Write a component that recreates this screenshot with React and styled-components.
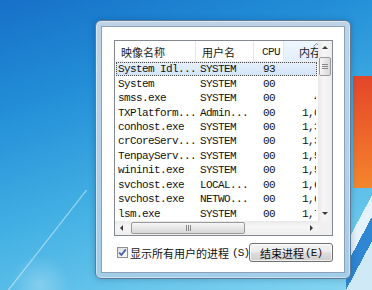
import styled, { createGlobalStyle } from 'styled-components'

const GlobalStyle = createGlobalStyle`
  html, body {
    margin: 0;
    padding: 0;
    width: 372px;
    height: 290px;
    overflow: hidden;
  }
`;

const processes = [
  { name: 'System Idl...', user: 'SYSTEM', cpu: '93', mem: '24 K', selected: true },
  { name: 'System', user: 'SYSTEM', cpu: '00', mem: '48 K' },
  { name: 'smss.exe', user: 'SYSTEM', cpu: '00', mem: '448 K' },
  { name: 'TXPlatform...', user: 'Admin...', cpu: '00', mem: '1,092 K' },
  { name: 'conhost.exe', user: 'SYSTEM', cpu: '00', mem: '1,312 K' },
  { name: 'crCoreServ...', user: 'SYSTEM', cpu: '00', mem: '1,336 K' },
  { name: 'TenpayServ...', user: 'SYSTEM', cpu: '00', mem: '1,516 K' },
  { name: 'wininit.exe', user: 'SYSTEM', cpu: '00', mem: '1,540 K' },
  { name: 'svchost.exe', user: 'LOCAL...', cpu: '00', mem: '1,648 K' },
  { name: 'svchost.exe', user: 'NETWO...', cpu: '00', mem: '1,676 K' },
  { name: 'lsm.exe', user: 'SYSTEM', cpu: '00', mem: '1,744 K' },
];

const Arrow = ({ dir }) => {
  const pts = {
    up: '1,5 4,2 7,5',
    down: '1,2 4,5 7,2',
    left: '5,1 2,4 5,7',
    right: '3,1 6,4 3,7',
  }[dir];
  return (
    <svg width="8" height="8" viewBox="0 0 8 8">
      <polygon points={pts} fill="#3a3a3a" />
    </svg>
  );
};

const Grip = ({ vertical }) =>
  vertical ? (
    <svg width="6" height="7" viewBox="0 0 6 7">
      <path d="M0 1.5h6M0 3.5h6M0 5.5h6" stroke="#8a8a8a" strokeWidth="1" />
    </svg>
  ) : (
    <svg width="7" height="6" viewBox="0 0 7 6">
      <path d="M1.5 0v6M3.5 0v6M5.5 0v6" stroke="#8a8a8a" strokeWidth="1" />
    </svg>
  );

export default function App() {
  return (
    <>
      <GlobalStyle />
      <Desktop>
        <Window>
          <Panel>
            <ListView>
              <Header>
                <HeaderCell $pad={6}>映像名称</HeaderCell>
                <HeaderCell $pad={6}>用户名</HeaderCell>
                <HeaderCell $pad={8} $mono>CPU</HeaderCell>
                <HeaderCell $pad={15} $sorted>
                  <SortMark>
                    <svg width="7" height="4" viewBox="0 0 7 4">
                      <path d="M0.5 3.5L3.5 0.5L6.5 3.5" fill="none" stroke="#6b8fb4" strokeWidth="1" />
                    </svg>
                  </SortMark>
                  内存(专用工作集)
                </HeaderCell>
              </Header>
              <Rows>
                {processes.map((p, i) => (
                  <Row key={i} $selected={p.selected}>
                    <Cell $pad={1}>{p.name}</Cell>
                    <Cell $pad={4}>{p.user}</Cell>
                    <Cell $pad={9}>{p.cpu}</Cell>
                    <Cell $right>{p.mem}</Cell>
                  </Row>
                ))}
              </Rows>
              <VScroll>
                <ScrollButton><Arrow dir="up" /></ScrollButton>
                <VThumb><Grip vertical /></VThumb>
                <Spacer />
                <ScrollButton><Arrow dir="down" /></ScrollButton>
              </VScroll>
              <HScroll>
                <ScrollButton><Arrow dir="left" /></ScrollButton>
                <HThumb><Grip /></HThumb>
                <Spacer />
                <ScrollButton><Arrow dir="right" /></ScrollButton>
              </HScroll>
              <Corner />
            </ListView>
            <Footer>
              <CheckLabel>
                <CheckBox>
                  <svg width="9" height="9" viewBox="0 0 9 9">
                    <path d="M1.2 4.6L3.4 7L7.8 1.4" fill="none" stroke="#3f5fa8" strokeWidth="1.7" />
                  </svg>
                </CheckBox>
                <span>显示所有用户的进程</span>
                <Mono>(S)</Mono>
              </CheckLabel>
              <Button>
                <span>结束进程</span>
                <Mono>(E)</Mono>
              </Button>
            </Footer>
          </Panel>
        </Window>
      </Desktop>
    </>
  );
}

const Desktop = styled.div`
  width: 372px;
  height: 290px;
  box-sizing: border-box;
  padding: 20px 0 0 95px;
  background:
    linear-gradient(118deg, transparent 0 38%, #e4f2fb 38% 52%, #2f86d2 52% 68%, #cfe9f7 68%) 346px 186px / 26px 104px no-repeat,
    linear-gradient(to bottom, #e2462a, #ef6a2b 60%, #f3862e) 353px 76px / 19px 112px no-repeat,
    linear-gradient(128deg, transparent 0 49%, rgba(255, 255, 255, 0.5) 49.6%, transparent 50.6%) 0 190px / 96px 100px no-repeat,
    radial-gradient(circle at 40px 285px, rgba(255, 255, 255, 0.25), transparent 30px),
    linear-gradient(162deg, #1670c7 0%, #238fd8 28%, #44b1e4 58%, #86d6f1 100%);
  font-family: "Noto Sans CJK SC", "Liberation Sans", sans-serif;
`;

const Window = styled.div`
  width: 256px;
  height: 259px;
  box-sizing: border-box;
  padding: 5px;
  border: 1px solid #5d7a96;
  border-radius: 6px;
  background: linear-gradient(to bottom, #bfd3e6, #b5cfe5 60%, #a2cde8);
  box-shadow: inset 0 0 0 1px rgba(255, 255, 255, 0.45), 0 0 6px rgba(0, 30, 70, 0.25);
`;

const Panel = styled.div`
  height: 100%;
  box-sizing: border-box;
  border: 1px solid #8aa2b9;
  background: #fff;
  padding: 13px 11px 10px 12px;
  display: flex;
  flex-direction: column;
  gap: 7px;
`;

const ListView = styled.div`
  width: 219px;
  height: 196px;
  box-sizing: border-box;
  border: 1px solid #828790;
  display: grid;
  grid-template-columns: 203px 14px;
  grid-template-rows: 21px 159px 14px;
  background: #fff;
`;

const Header = styled.div`
  grid-column: 1;
  grid-row: 1;
  display: grid;
  grid-template-columns: 81px 58px 30px 66px;
  overflow: hidden;
  border-bottom: 1px solid #eef0f3;
`;

const HeaderCell = styled.div`
  position: relative;
  display: flex;
  align-items: center;
  padding-left: ${p => p.$pad}px;
  padding-top: 1px;
  border-right: 1px solid #e3e8ee;
  white-space: nowrap;
  overflow: hidden;
  font-size: 11px;
  font-family: ${p => (p.$mono ? '"Liberation Mono", monospace' : '"Noto Sans CJK SC", sans-serif')};
  letter-spacing: ${p => (p.$mono ? '-0.6px' : '0')};
  color: #1b1b1b;
  background: ${p => (p.$sorted ? 'linear-gradient(to bottom, #f0f7fe, #e2eefa)' : '#fff')};
`;

const SortMark = styled.span`
  position: absolute;
  top: 1px;
  left: 29px;
  line-height: 0;
`;

const Rows = styled.div`
  grid-column: 1;
  grid-row: 2;
  display: grid;
  grid-auto-rows: 1fr;
  overflow: hidden;
`;

const Row = styled.div`
  margin: 0 1px;
  display: grid;
  grid-template-columns: 79px 58px 30px 66px;
  align-items: center;
  overflow: hidden;
  border: 1px ${p => (p.$selected ? 'dotted #4a4a4a' : 'solid transparent')};
  background: ${p => (p.$selected ? 'linear-gradient(to bottom, #e6f0fb, #d3e4f8)' : 'transparent')};
`;

const Cell = styled.div`
  padding-left: ${p => p.$pad || 0}px;
  padding-right: ${p => (p.$right ? 6 : 0)}px;
  text-align: ${p => (p.$right ? 'right' : 'left')};
  white-space: nowrap;
  font-family: "Liberation Mono", monospace;
  font-size: 11px;
  letter-spacing: -0.6px;
  color: #111;
  line-height: 12px;
`;

const VScroll = styled.div`
  grid-column: 2;
  grid-row: 1 / 3;
  display: flex;
  flex-direction: column;
  background: linear-gradient(to right, #e9e9e9, #f6f6f6 40%, #eeeeee);
`;

const HScroll = styled.div`
  grid-column: 1;
  grid-row: 3;
  display: flex;
  background: linear-gradient(to bottom, #e9e9e9, #f6f6f6 40%, #eeeeee);
`;

const Corner = styled.div`
  grid-column: 2;
  grid-row: 3;
  background: #f0f0f0;
`;

const ScrollButton = styled.div`
  width: 14px;
  height: 14px;
  flex: none;
  display: flex;
  align-items: center;
  justify-content: center;
`;

const Spacer = styled.div`
  flex: 1;
`;

const VThumb = styled.div`
  margin: 2px 1px 0;
  height: 19px;
  flex: none;
  box-sizing: border-box;
  border: 1px solid #9a9a9a;
  border-radius: 2px;
  background: linear-gradient(to right, #f7f7f7, #e6e6e6 50%, #d8d8d8);
  display: flex;
  align-items: center;
  justify-content: center;
`;

const HThumb = styled.div`
  margin: 1px 0 1px 2px;
  width: 114px;
  flex: none;
  box-sizing: border-box;
  border: 1px solid #9a9a9a;
  border-radius: 2px;
  background: linear-gradient(to bottom, #f7f7f7, #e6e6e6 50%, #d8d8d8);
  display: flex;
  align-items: center;
  justify-content: center;
`;

const Footer = styled.div`
  width: 219px;
  height: 19px;
  display: flex;
  align-items: center;
  justify-content: space-between;
`;

const CheckLabel = styled.label`
  display: flex;
  align-items: center;
  gap: 2px;
  margin-left: 3px;
  font-size: 11px;
  color: #111;
  white-space: nowrap;
`;

const CheckBox = styled.span`
  width: 11px;
  height: 11px;
  box-sizing: border-box;
  border: 1px solid #8e8f8f;
  background: linear-gradient(135deg, #dcdcdc, #ffffff);
  display: flex;
  align-items: center;
  justify-content: center;
`;

const Mono = styled.span`
  font-family: "Liberation Mono", monospace;
  font-size: 11px;
  letter-spacing: -0.8px;
  margin-left: 1px;
`;

const Button = styled.div`
  width: 86px;
  height: 19px;
  box-sizing: border-box;
  border: 1px solid #707070;
  border-radius: 3px;
  background: linear-gradient(to bottom, #f4f4f4, #ebebeb 48%, #dddddd 52%, #cfcfcf);
  box-shadow: inset 0 0 0 1px rgba(255, 255, 255, 0.7);
  display: flex;
  align-items: center;
  justify-content: center;
  font-size: 11px;
  color: #111;
  white-space: nowrap;
`;
